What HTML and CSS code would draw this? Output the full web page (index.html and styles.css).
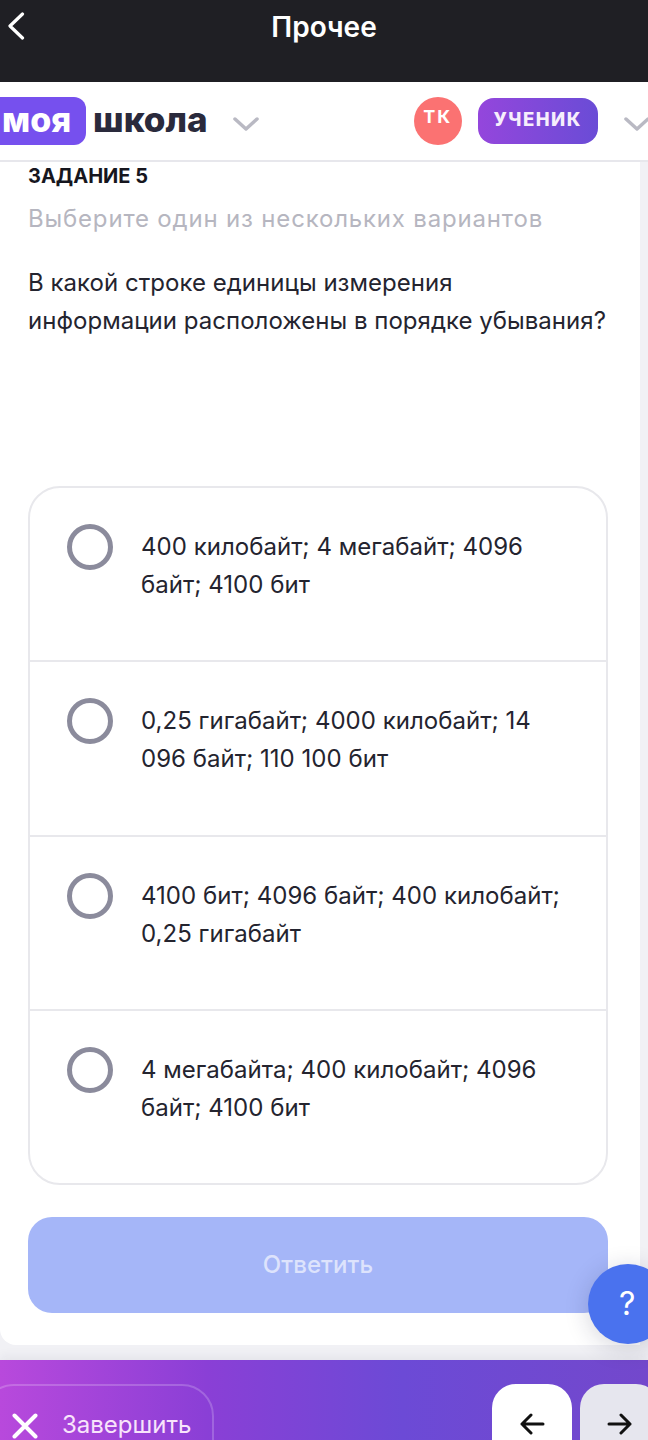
FILE: index.html
```html
<!DOCTYPE html>
<html lang="ru">
<head>
<meta charset="utf-8">
<title>Прочее</title>
<link rel="stylesheet" href="styles.css">
</head>
<body>
<div class="phone">
  <div class="topbar">
    <svg class="back" width="18" height="28" viewBox="0 0 18 28"><path d="M15.500 2 3 14l12.500 12" fill="none" stroke="#fff" stroke-width="3.200" stroke-linecap="round" stroke-linejoin="round"/></svg>
    <div class="title">Прочее</div>
  </div>
  <header class="header">
    <div class="logo">
      <span class="logo-badge">моя</span>
      <span class="logo-text">школа</span>
    </div>
    <svg class="chev chev-logo" width="26" height="14" viewBox="0 0 26 14"><path d="M2 2l11 10L24 2" fill="none" stroke="#b9b9c3" stroke-width="3.500" stroke-linecap="round" stroke-linejoin="round"/></svg>
    <div class="avatar">ТК</div>
    <div class="role">УЧЕНИК</div>
    <svg class="chev chev-role" width="26" height="14" viewBox="0 0 26 14"><path d="M2 2l11 10L24 2" fill="none" stroke="#b9b9c3" stroke-width="3.500" stroke-linecap="round" stroke-linejoin="round"/></svg>
  </header>
  <main class="content">
    <div class="card">
      <div class="task">ЗАДАНИЕ 5</div>
      <div class="hint">Выберите один из нескольких вариантов</div>
      <div class="question">В какой строке единицы измерения<br>информации расположены в порядке убывания?</div>
      <div class="options">
        <div class="option"><span class="radio"></span><span class="option-text">400 килобайт; 4 мегабайт; 4096 байт; 4100 бит</span></div>
        <div class="option"><span class="radio"></span><span class="option-text">0,25 гигабайт; 4000 килобайт; 14 096 байт; 110 100 бит</span></div>
        <div class="option"><span class="radio"></span><span class="option-text">4100 бит; 4096 байт; 400 килобайт; 0,25 гигабайт</span></div>
        <div class="option"><span class="radio"></span><span class="option-text">4 мегабайта; 400 килобайт; 4096 байт; 4100 бит</span></div>
      </div>
      <div class="answer">Ответить</div>
    </div>
  </main>
  <div class="help">?</div>
  <footer class="footer">
    <div class="finish">
      <svg width="26" height="26" viewBox="0 0 26 26"><path d="M2.500 2.500l21 21M23.500 2.500l-21 21" fill="none" stroke="#fff" stroke-width="4" stroke-linecap="round"/></svg>
      <span>Завершить</span>
    </div>
    <div class="nav">
      <div class="nav-btn nav-prev"><svg width="26" height="22" viewBox="0 0 26 22"><path d="M24 11H3M12 2l-9 9 9 9" fill="none" stroke="#111" stroke-width="3" stroke-linecap="round" stroke-linejoin="round"/></svg></div>
      <div class="nav-btn nav-next"><svg width="26" height="22" viewBox="0 0 26 22"><path d="M2 11h21M14 2l9 9-9 9" fill="none" stroke="#111" stroke-width="3" stroke-linecap="round" stroke-linejoin="round"/></svg></div>
    </div>
  </footer>
</div>
</body>
</html>
```
FILE: styles.css
```css
* { box-sizing: border-box; }
html, body { margin: 0; padding: 0; }
body { font-family: Inter, "Noto Sans", sans-serif; background: #f1f1f5; }
.phone { position: relative; width: 648px; height: 1440px; overflow: hidden; display: flex; flex-direction: column; background: #f1f1f5; }

.topbar { height: 82px; flex: none; background: #1f1f24; position: relative; display: flex; justify-content: center; padding-top: 10px; }
.back { position: absolute; left: 7px; top: 12px; }
.title { color: #fff; font-size: 28px; font-weight: 600; line-height: 34px; }

.header { height: 80px; flex: none; background: #fff; border-bottom: 2px solid #e7e7ec; display: flex; align-items: flex-start; padding-top: 15px; }
.logo { display: flex; align-items: center; margin-left: -12px; }
.logo-badge { width: 98px; height: 48px; background: #7650ee; border-radius: 12px; color: #fff; font-size: 34px; font-weight: 800; line-height: 46px; padding-left: 14px; }
.logo-text { margin: 0 0 4px 7px; color: #2a2a3c; font-size: 35px; font-weight: 800; line-height: 42px; }
.chev { flex: none; }
.chev-logo { margin: 20px 0 0 25px; }
.avatar { width: 48px; height: 48px; flex: none; margin-left: 155px; border-radius: 50%; background: #fb7272; color: #fff; font-size: 18px; font-weight: 700; letter-spacing: 2px; text-align: center; line-height: 39px; }
.role { width: 120px; height: 46px; flex: none; margin: 1px 0 0 16px; border-radius: 16px; background: linear-gradient(90deg, #9446dc, #6a4cd6); color: #f6eefc; font-size: 18.500px; font-weight: 800; letter-spacing: 1.500px; text-align: center; line-height: 42px; }
.chev-role { margin: 20px 0 0 26px; }

.content { flex: none; height: 1183px; width: 640px; background: #fff; border-bottom-left-radius: 16px; }
.card { padding: 0 0 0 28px; }
.task { font-size: 20px; font-weight: 700; line-height: 28px; color: #16161e; }
.hint { margin-top: 13px; font-size: 24px; letter-spacing: .82px; line-height: 32px; color: #b6b6c0; }
.question { margin-top: 29px; font-size: 24px; font-weight: 400; letter-spacing: .03px; line-height: 38px; color: #24242f; }
.options { margin-top: 146px; border: 2px solid #e8e8ec; border-radius: 32px; width: 580px; }
.option { height: 174.250px; display: flex; align-items: flex-start; padding: 36px 36px 0 37px; border-bottom: 2px solid #e8e8ec; }
.option:last-child { border-bottom: 0; height: 171.750px; }
.radio { width: 46px; height: 46px; flex: none; border: 5px solid #8b8b9c; border-radius: 50%; }
.option-text { margin-left: 28px; margin-top: 4px; font-size: 24px; font-weight: 400; letter-spacing: .03px; line-height: 38px; color: #24242f; }
.answer { margin-top: 32.500px; width: 580px; height: 96px; border-radius: 24px; background: #a5b6f8; color: #dde3fc; font-size: 24px; font-weight: 500; letter-spacing: .1px; line-height: 96px; text-align: center; }

.help { position: absolute; left: 588px; top: 1264px; width: 80px; height: 80px; border-radius: 50%; background: #4a72ee; color: #fff; font-size: 32px; font-weight: 400; line-height: 80px; padding-left: 31px; box-shadow: 0 4px 24px rgba(30, 30, 60, .18); }

.footer { margin-top: 15px; height: 80px; flex: none; background: linear-gradient(90deg, #b849dc 0%, #8a3fd6 32%, #6c4ad6 62%, #7348cc 100%); box-shadow: 0 -4px 10px rgba(40, 40, 70, .06); display: flex; justify-content: space-between; padding-top: 24px; }
.finish { width: 232px; height: 100px; margin-left: -18px; border: 2px solid rgba(255, 255, 255, .2); border-radius: 32px; display: flex; align-items: flex-start; padding: 27px 0 0 28px; color: #f8e4fb; font-size: 24px; font-weight: 400; line-height: 24px; }
.finish span { margin-left: 24px; }
.nav { display: flex; gap: 8px; margin-right: -12px; }
.nav-btn { width: 80px; height: 100px; border-radius: 24px; display: flex; justify-content: center; align-items: flex-start; padding-top: 29px; }
.nav-prev { background: #fff; }
.nav-next { background: #e6e6ee; }
```
